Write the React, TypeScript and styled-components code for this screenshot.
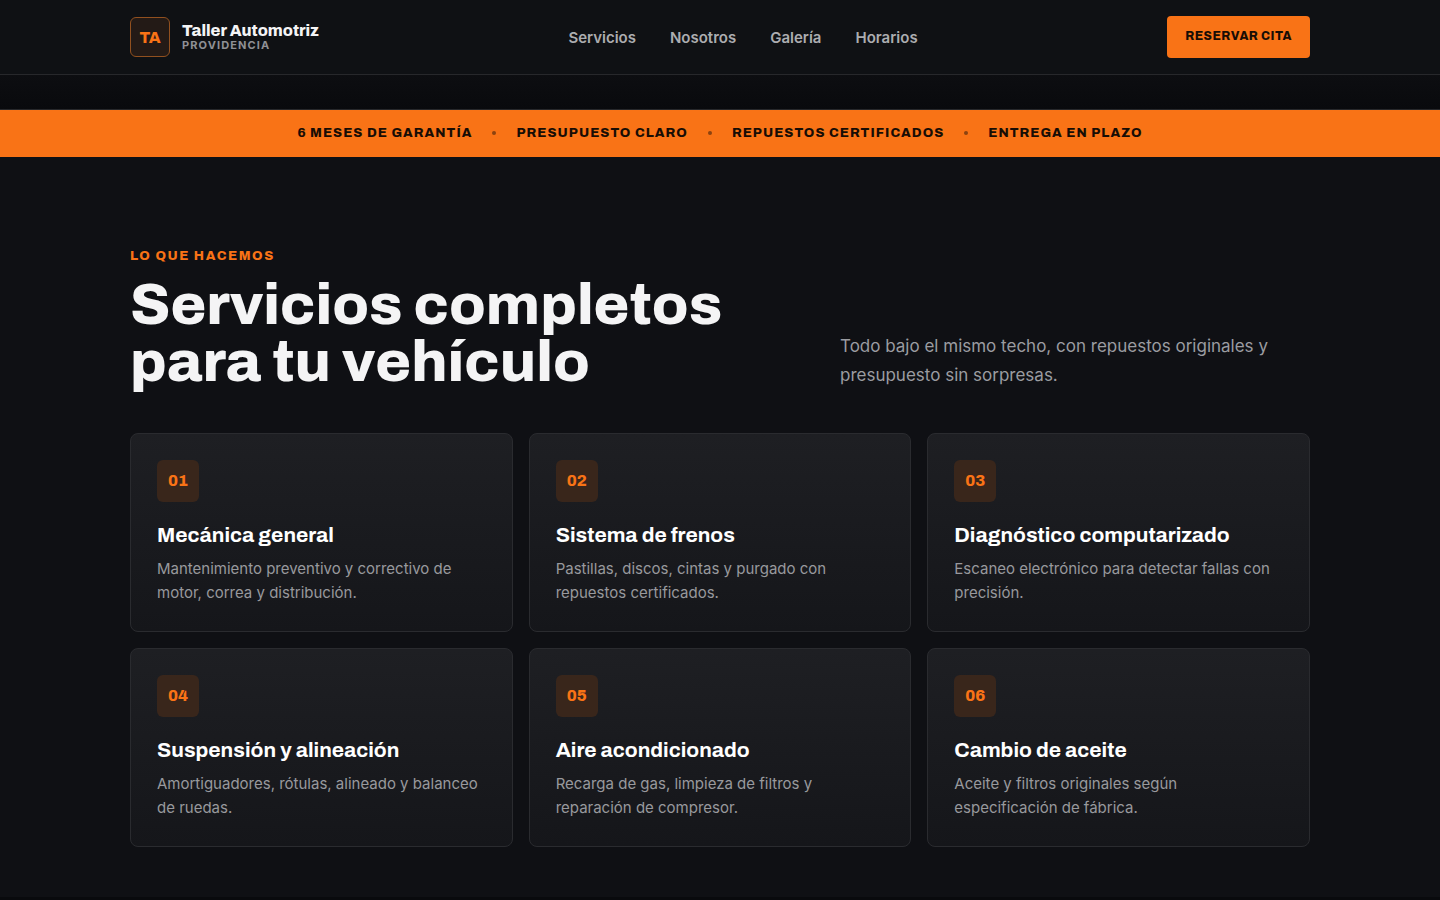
import React from "react";
import styled, { createGlobalStyle } from "styled-components";

const display = `Archivo, Inter, "Liberation Sans", sans-serif`;
const body = `Inter, "Liberation Sans", sans-serif`;
const orange = "#f97316";

const GlobalStyle = createGlobalStyle`
  *, *::before, *::after { box-sizing: border-box; }
  body {
    margin: 0;
    background: #0f1014;
    color: #f4f4f5;
    font-family: ${body};
    font-size: 16px;
  }
  h1, h2, h3, p, ul { margin: 0; padding: 0; }
  ul { list-style: none; }
  a { color: inherit; text-decoration: none; }
`;

const Container = styled.div`
  width: 100%;
  max-width: 1228px;
  margin: 0 auto;
  padding: 0 24px;
`;

const Header = styled.header`
  position: sticky;
  top: 0;
  z-index: 10;
  background: #0f1114;
  border-bottom: 1px solid #27282b;
`;

const HeaderRow = styled(Container)`
  display: flex;
  align-items: center;
  justify-content: space-between;
  padding-top: 16px;
  padding-bottom: 16px;
`;

const Brand = styled.a`
  display: flex;
  align-items: center;
  gap: 12px;
`;

const Logo = styled.span`
  display: grid;
  place-items: center;
  width: 40px;
  height: 40px;
  padding-top: 1px;
  border: 1px solid #91501f;
  border-radius: 6px;
  background: #231a16;
  color: ${orange};
  font: 800 16px/20px ${display};
  letter-spacing: -0.02em;
`;

const BrandText = styled.span`
  display: flex;
  flex-direction: column;
`;

const BrandName = styled.strong`
  font: 800 16px/16px ${display};
`;

const BrandPlace = styled.span`
  color: #8f9095;
  font-size: 11px;
  font-weight: 700;
  line-height: 13px;
  letter-spacing: 0.1em;
  text-transform: uppercase;
`;

const Nav = styled.nav`
  display: flex;
  gap: 34px;
  padding-top: 2px;
`;

const NavLink = styled.a`
  color: #acadb0;
  font-size: 15px;
  font-weight: 600;
  line-height: 24px;
`;

const BookButton = styled.button`
  height: 42px;
  padding: 0 18px 2px;
  border: 0;
  border-radius: 4px;
  background: ${orange};
  color: #180d05;
  font: 800 12px/18px ${display};
  letter-spacing: 0.04em;
  text-transform: uppercase;
  cursor: pointer;
`;

const HeroEdge = styled.div`
  height: 35px;
  background: linear-gradient(#0d0e11, #090a0d);
  border-bottom: 1px solid #27282b;
`;

const PromiseBar = styled.ul`
  display: flex;
  flex-wrap: wrap;
  justify-content: center;
  gap: 4px 20px;
  padding: 13px 24px 14px;
  background: ${orange};
  color: #180d05;
  font: 800 13px/20px ${display};
  letter-spacing: 0.08em;
  text-transform: uppercase;
`;

const PromiseItem = styled.li`
  display: flex;
  align-items: center;
  gap: 20px;

  & + &::before {
    content: "";
    width: 4px;
    height: 4px;
    border-radius: 50%;
    background: #8c4310;
  }
`;

const Section = styled.section`
  padding: 89px 0 50px;
  border-bottom: 3px solid #090a0d;
`;

const SectionHead = styled.div`
  display: grid;
  grid-template-columns: 7fr 5fr;
  gap: 52px;
  align-items: end;
  margin-bottom: 43px;
`;

const Eyebrow = styled.p`
  margin-bottom: 9px;
  color: ${orange};
  font: 800 13px/21px ${display};
  letter-spacing: 0.12em;
  text-transform: uppercase;
`;

const Title = styled.h2`
  font: 800 58px/57px ${display};
`;

const Intro = styled.p`
  color: #9b9ca1;
  font-size: 17px;
  line-height: 29px;
`;

const Grid = styled.ul`
  display: grid;
  grid-template-columns: repeat(3, 1fr);
  gap: 16px;
`;

const Card = styled.li`
  padding: 26px;
  border: 1px solid #2a2b2f;
  border-radius: 8px;
  background: linear-gradient(#1e1f23, #15161a);
`;

const Badge = styled.span`
  display: grid;
  place-items: center;
  width: 42px;
  height: 42px;
  border-radius: 6px;
  background: #39261b;
  color: ${orange};
  font: 800 16px/20px ${display};
`;

const CardTitle = styled.h3`
  margin: 20px 0 8px;
  color: #ffffff;
  font: 700 21px/27px ${display};
`;

const CardText = styled.p`
  color: #98999d;
  font-size: 15px;
  line-height: 24px;
`;

const links = [
  ["Servicios", "#servicios"],
  ["Nosotros", "#nosotros"],
  ["Galería", "#galeria"],
  ["Horarios", "#horarios"],
];

const promises = [
  "6 meses de garantía",
  "Presupuesto claro",
  "Repuestos certificados",
  "Entrega en plazo",
];

const services = [
  ["Mecánica general", "Mantenimiento preventivo y correctivo de motor, correa y distribución."],
  ["Sistema de frenos", "Pastillas, discos, cintas y purgado con repuestos certificados."],
  ["Diagnóstico computarizado", "Escaneo electrónico para detectar fallas con precisión."],
  ["Suspensión y alineación", "Amortiguadores, rótulas, alineado y balanceo de ruedas."],
  ["Aire acondicionado", "Recarga de gas, limpieza de filtros y reparación de compresor."],
  ["Cambio de aceite", "Aceite y filtros originales según especificación de fábrica."],
];

export default function App() {
  return (
    <>
      <GlobalStyle />
      <Header>
        <HeaderRow>
          <Brand href="#inicio">
            <Logo>TA</Logo>
            <BrandText>
              <BrandName>Taller Automotriz</BrandName>
              <BrandPlace>Providencia</BrandPlace>
            </BrandText>
          </Brand>
          <Nav>
            {links.map(([label, href]) => (
              <NavLink key={href} href={href}>{label}</NavLink>
            ))}
          </Nav>
          <BookButton type="button">Reservar cita</BookButton>
        </HeaderRow>
      </Header>
      <main>
        <HeroEdge />
        <PromiseBar>
          {promises.map((text) => (
            <PromiseItem key={text}>{text}</PromiseItem>
          ))}
        </PromiseBar>
        <Section id="servicios">
          <Container>
            <SectionHead>
              <div>
                <Eyebrow>Lo que hacemos</Eyebrow>
                <Title>Servicios completos<br />para tu vehículo</Title>
              </div>
              <Intro>Todo bajo el mismo techo, con repuestos originales y presupuesto sin sorpresas.</Intro>
            </SectionHead>
            <Grid>
              {services.map(([name, text], i) => (
                <Card key={name}>
                  <Badge>{String(i + 1).padStart(2, "0")}</Badge>
                  <CardTitle>{name}</CardTitle>
                  <CardText>{text}</CardText>
                </Card>
              ))}
            </Grid>
          </Container>
        </Section>
      </main>
    </>
  );
}
